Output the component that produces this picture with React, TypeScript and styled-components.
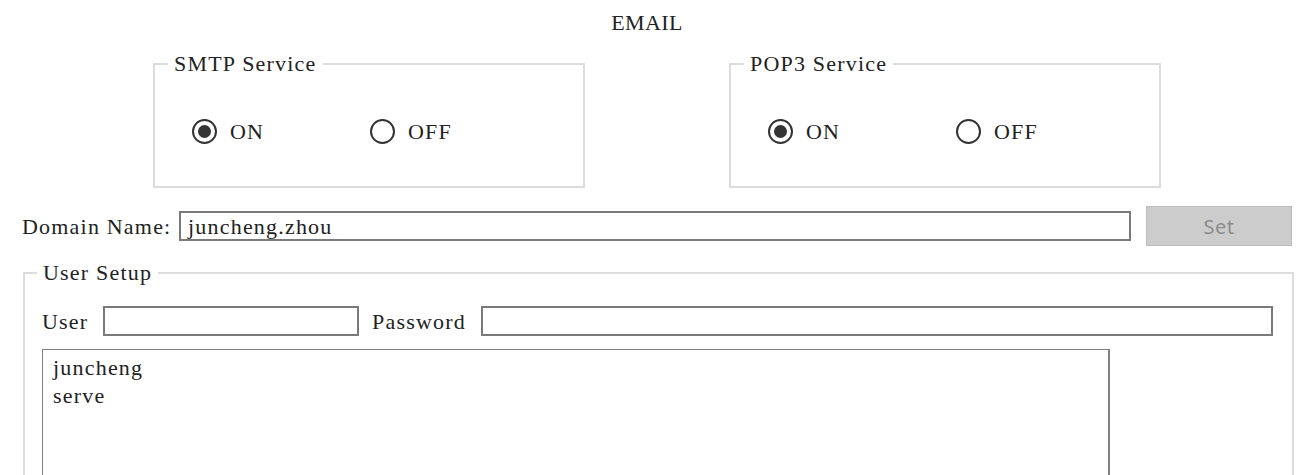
import styled, { createGlobalStyle } from "styled-components"

const GlobalStyle = createGlobalStyle`
  body {
    margin: 0;
    background: #ffffff;
    font-family: "Liberation Serif", "Noto Sans CJK SC", serif;
    font-size: 22px;
    letter-spacing: 1.2px;
    color: #222222;
  }
`

const Page = styled.div`
  width: 1300px;
  height: 475px;
  overflow: hidden;
`

const Title = styled.div`
  margin-top: 11px;
  line-height: 24px;
  text-align: center;
  padding-right: 6px;
  letter-spacing: 0.4px;
`

const ServiceRow = styled.div`
  display: flex;
  gap: 144px;
  margin-top: 17px;
  padding-left: 153px;
`

const Group = styled.fieldset<{ $width?: number; $height?: number }>`
  box-sizing: border-box;
  width: ${(p) => (p.$width ? `${p.$width}px` : "auto")};
  height: ${(p) => (p.$height ? `${p.$height}px` : "auto")};
  margin: 0;
  padding: 0;
  border: 2px solid #dcdcdc;
  min-width: 0;
`

const Legend = styled.legend<{ $offset?: number }>`
  margin-left: ${(p) => p.$offset ?? 13}px;
  padding: 0 6px;
  line-height: 24px;
`

const RadioGroup = styled.div<{ $step: number }>`
  display: flex;
  align-items: center;
  padding: 41px 0 0 37px;

  & > label:first-child {
    width: ${(p) => p.$step}px;
  }
`

const Option = styled.label`
  display: flex;
  align-items: center;
  gap: 13px;
  line-height: 26px;
  padding-top: 2px;
`

const Circle = styled.span<{ $checked?: boolean }>`
  position: relative;
  flex: none;
  box-sizing: border-box;
  width: 25px;
  height: 25px;
  margin-top: -2px;
  border: 2px solid #333333;
  border-radius: 50%;
  background: #ffffff;

  &::after {
    content: "";
    display: ${(p) => (p.$checked ? "block" : "none")};
    position: absolute;
    left: 4px;
    top: 4px;
    width: 13px;
    height: 13px;
    border-radius: 50%;
    background: #333333;
  }
`

const DomainRow = styled.div`
  display: flex;
  align-items: center;
  margin-top: 18px;
  padding-left: 22px;
  height: 40px;
`

const Label = styled.span<{ $width: number; $indent?: number }>`
  flex: none;
  width: ${(p) => p.$width}px;
  margin-left: ${(p) => p.$indent ?? 0}px;
  white-space: pre;
  line-height: 24px;
  padding-top: 1px;
`

const TextBox = styled.div<{ $width: number }>`
  flex: none;
  box-sizing: border-box;
  width: ${(p) => p.$width}px;
  height: 30px;
  border: 2px solid #7a7a7a;
  padding-left: 7px;
  line-height: 27px;
  white-space: pre;
`

const SetButton = styled.button`
  box-sizing: border-box;
  width: 146px;
  height: 40px;
  margin-left: 15px;
  border: 1px solid #bdbdbd;
  background: #cccccc;
  color: #8c8c8c;
  font-family: "Noto Sans", "Liberation Sans", sans-serif;
  font-size: 20px;
  letter-spacing: 0.5px;
  padding: 0;
`

const SetupBox = styled(Group)`
  margin: 15px 0 0 23px;
`

const UserRow = styled.div`
  display: flex;
  align-items: center;
  padding: 21px 0 0 17px;
`

const ListBox = styled.div`
  box-sizing: border-box;
  width: 1068px;
  height: 160px;
  margin: 13px 0 0 17px;
  padding: 4px 10px;
  border: 1px solid #808080;
  border-right-width: 2px;
  line-height: 28px;
`

const Radio = ({ label, checked }: { label: string; checked?: boolean }) => (
  <Option>
    <Circle $checked={checked} />
    {label}
  </Option>
)

export default function App() {
  return (
    <Page>
      <GlobalStyle />
      <Title>EMAIL</Title>
      <ServiceRow>
        <Group $width={432} $height={136}>
          <Legend>SMTP Service</Legend>
          <RadioGroup $step={178}>
            <Radio label="ON" checked />
            <Radio label="OFF" />
          </RadioGroup>
        </Group>
        <Group $width={432} $height={136}>
          <Legend>POP3 Service</Legend>
          <RadioGroup $step={188}>
            <Radio label="ON" checked />
            <Radio label="OFF" />
          </RadioGroup>
        </Group>
      </ServiceRow>
      <DomainRow>
        <Label $width={157}>Domain Name:</Label>
        <TextBox $width={952}>juncheng.zhou</TextBox>
        <SetButton>Set</SetButton>
      </DomainRow>
      <SetupBox $width={1271} $height={300}>
        <Legend $offset={12}>User Setup</Legend>
        <UserRow>
          <Label $width={61}>User</Label>
          <TextBox $width={256} />
          <Label $width={109} $indent={13}>Password</Label>
          <TextBox $width={792} />
        </UserRow>
        <ListBox>
          <div>juncheng</div>
          <div>serve</div>
        </ListBox>
      </SetupBox>
    </Page>
  )
}
